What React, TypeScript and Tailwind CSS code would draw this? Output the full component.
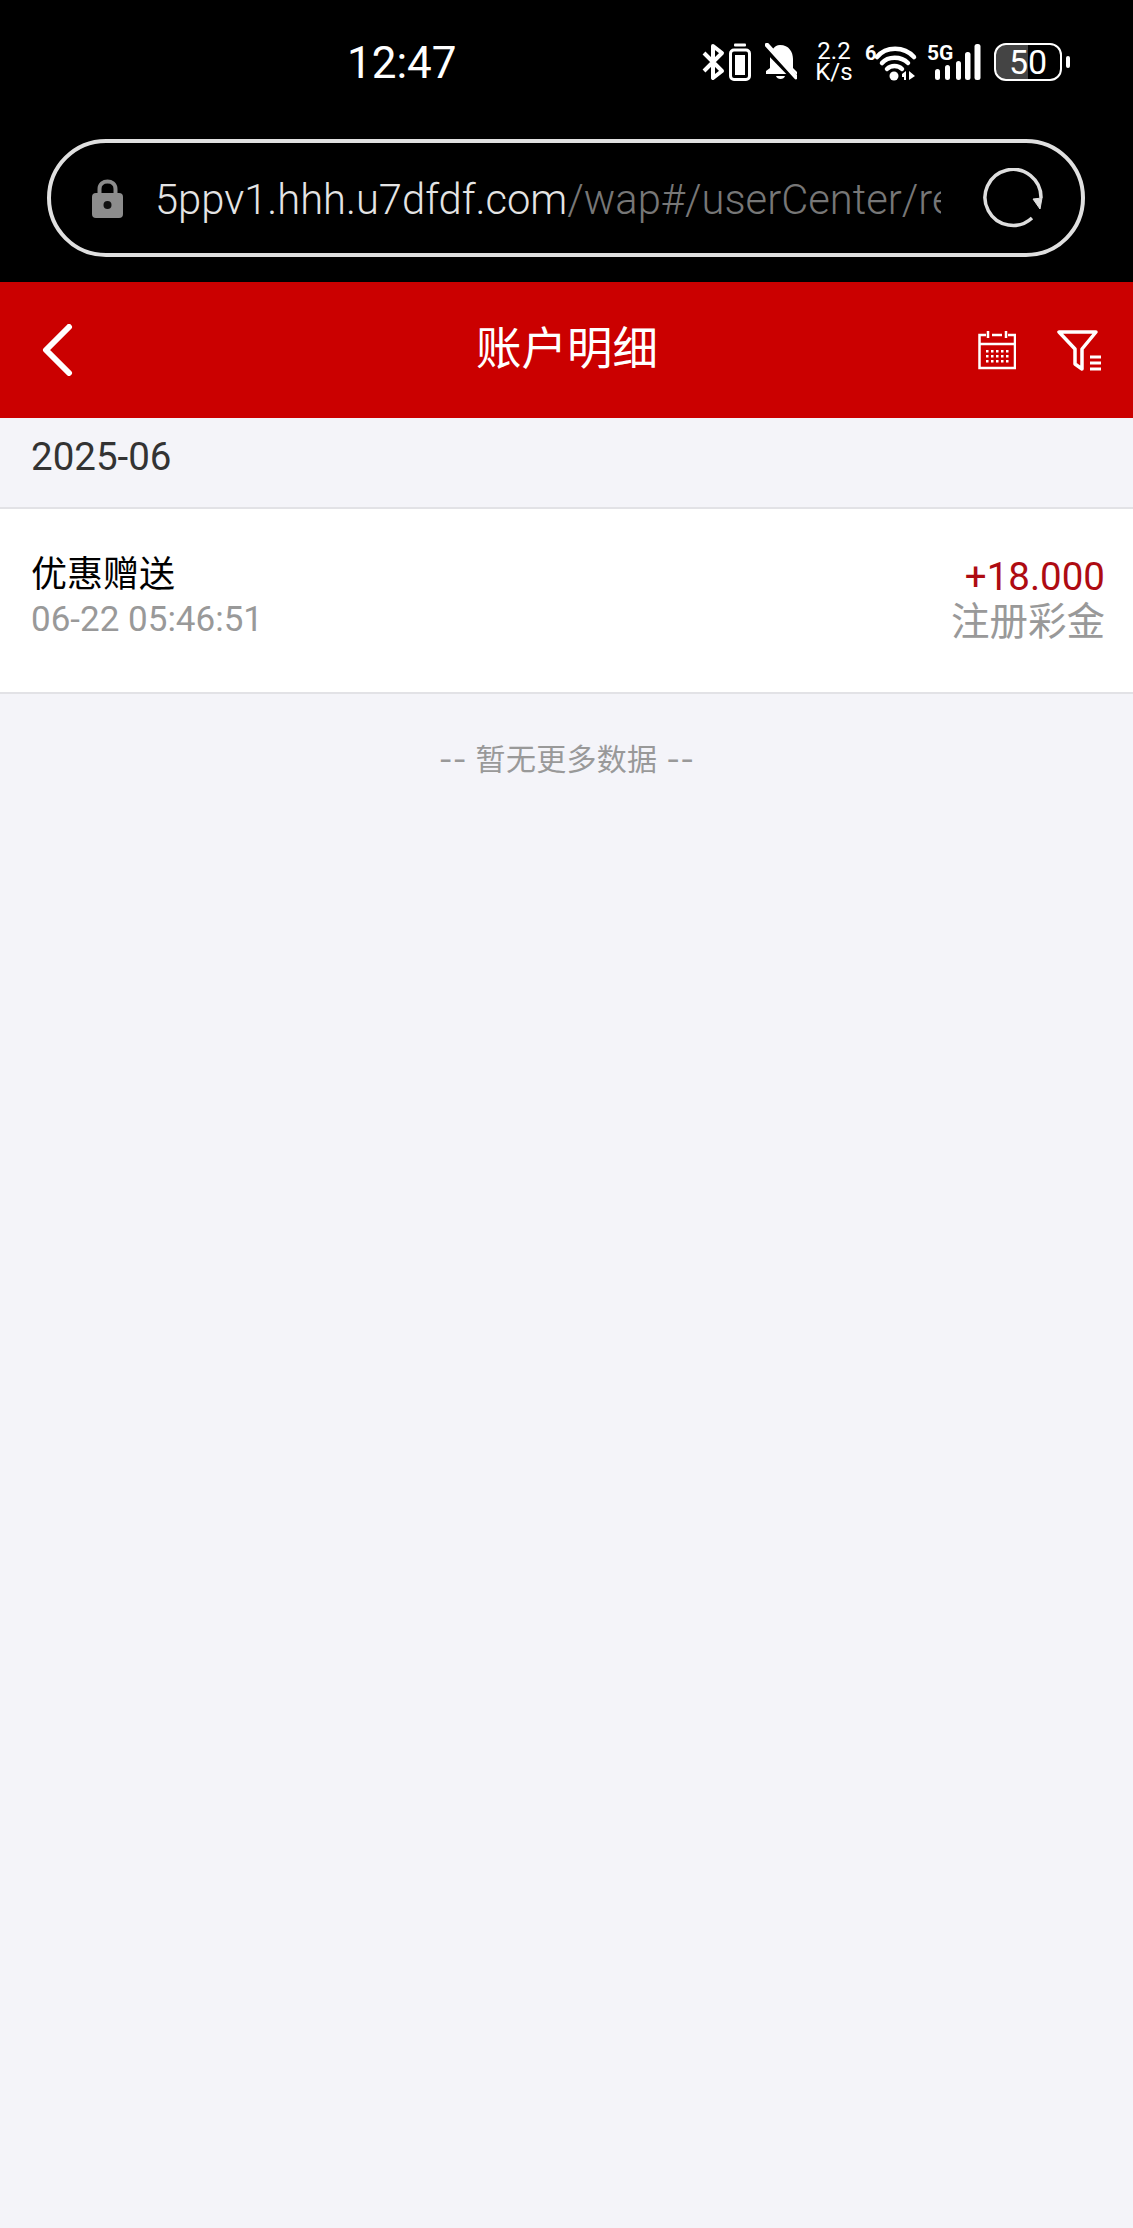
const sans = "font-['Roboto','Noto_Sans_CJK_SC',sans-serif]";

function Bluetooth() {
  return (
    <svg width="24" height="38" viewBox="0 0 24 38" fill="none" stroke="white" strokeWidth="4" strokeLinejoin="round">
      <path d="M2 10 L20 28 L11 35 L11 3 L20 10 L2 28" />
    </svg>
  );
}

function BatterySaver() {
  return (
    <svg width="22" height="38" viewBox="0 0 22 38" fill="none">
      <rect x="5" y="0.5" width="12" height="3" rx="1" fill="white" />
      <rect x="1.5" y="7" width="19" height="29.5" rx="3.5" stroke="white" strokeWidth="3" />
      <rect x="6" y="12" width="10" height="20" fill="white" />
    </svg>
  );
}

function BellMuted() {
  return (
    <svg width="32" height="37" viewBox="0 0 32 37" fill="none">
      <path d="M15 2 C24 2 28 9 28 16 L28 25 L32 29 L32 31 L1 31 L1 28 L5 25 L5 14 C6 8 9 2 15 2 Z" fill="white" />
      <path d="M11 33 L20 33 C19 37 12 37 11 33 Z" fill="white" />
      <path d="M-1 3 L31 36" stroke="black" strokeWidth="7" />
      <path d="M2 2 L31 34" stroke="white" strokeWidth="4.5" strokeLinecap="round" />
    </svg>
  );
}

function WifiSix() {
  return (
    <svg className="overflow-visible" width="52" height="38" viewBox="0 0 52 38" fill="none">
      <text x="0" y="17" fill="white" fontSize="20" fontWeight="700" fontFamily="Roboto, sans-serif">6</text>
      <path d="M12 14 C21 3 39 3 49 14" stroke="white" strokeWidth="4.5" strokeLinecap="round" />
      <path d="M17 20 C23 13 36 13 43 20" stroke="white" strokeWidth="4.5" strokeLinecap="round" />
      <path d="M22 26 C26 22 33 22 37 26" stroke="white" strokeWidth="4.5" strokeLinecap="round" />
      <circle cx="29" cy="33" r="4.5" fill="white" />
      <path d="M37 31 L41 28 L41 37 L39 37 L39 34 L37 34 Z M44 28 L50 33 L44 37 Z" fill="white" />
    </svg>
  );
}

function Signal() {
  return (
    <svg className="overflow-visible" width="54" height="38" viewBox="0 0 54 38" fill="white">
      <text x="0" y="17" fontSize="21" fontWeight="700" fontFamily="Roboto, sans-serif">5G</text>
      <rect x="8" y="26" width="5" height="11" rx="2.5" />
      <rect x="18" y="22" width="5" height="15" rx="2.5" />
      <rect x="29" y="18" width="5" height="19" rx="2.5" />
      <rect x="38" y="9" width="5.5" height="28" rx="2.5" />
      <rect x="47.5" y="1" width="6" height="36" rx="2.5" />
    </svg>
  );
}

function Lock() {
  return (
    <svg width="31" height="39" viewBox="0 0 31 39" fill="none">
      <path d="M7.5 17 L7.5 10 C7.5 0 23.5 0 23.5 10 L23.5 17" stroke="#8c8c8c" strokeWidth="4" />
      <rect x="0" y="14" width="31" height="25" rx="4" fill="#8c8c8c" />
      <circle cx="15.5" cy="26" r="4" fill="#111" />
    </svg>
  );
}

function Refresh() {
  return (
    <svg width="60" height="60" viewBox="0 0 60 60" fill="none">
      <path d="M49 50 A28 28 0 1 1 58 30" stroke="#dedede" strokeWidth="3.5" />
      <path d="M50 31 L59 30 L57 41 Z" fill="#dedede" stroke="#dedede" strokeWidth="1" strokeLinejoin="round" />
    </svg>
  );
}

function BackArrow() {
  return (
    <svg width="32" height="52" viewBox="0 0 32 52" fill="none">
      <path d="M28 3 L5 26 L28 49" stroke="white" strokeWidth="6" strokeLinecap="round" strokeLinejoin="round" />
    </svg>
  );
}

function Calendar() {
  const dots = [];
  for (const y of [20, 25, 30]) {
    for (const x of [8, 13, 18, 23, 28]) {
      dots.push(<rect key={`${x}-${y}`} x={x} y={y} width="2.5" height="2.5" fill="white" />);
    }
  }
  return (
    <svg width="38" height="40" viewBox="0 0 38 40" fill="none">
      <path d="M8 5 L1.5 5 L1.5 38 L37 38 L37 5 L30 5" stroke="white" strokeWidth="2.5" />
      <path d="M14 5 L24 5 M10 1 L10 8 M28 1 L28 8 M1.5 14 L37 14" stroke="white" strokeWidth="2.5" />
      {dots}
    </svg>
  );
}

function Filter() {
  return (
    <svg width="44" height="41" viewBox="0 0 44 41" fill="none">
      <path d="M2 2 L39 2 L25 19 L25 39 L18 34 L18 19 Z" stroke="white" strokeWidth="3.5" strokeLinejoin="round" />
      <path d="M33 27 L44 27 M33 33 L44 33 M33 39 L44 39" stroke="white" strokeWidth="3" />
    </svg>
  );
}

export default function App() {
  return (
    <div className={`${sans} min-h-[2228px] w-full bg-[#f4f4f9]`}>
      <div className="bg-black">
        <div className="flex h-[139px] items-start pt-[43px] text-white">
          <div className="ml-[347px] w-[355px] text-[44px] leading-[40px] font-normal">12:47</div>
          <Bluetooth />
          <div className="ml-[3px]"><BatterySaver /></div>
          <div className="ml-[14px]"><BellMuted /></div>
          <div className="mt-[-2px] ml-[18px] w-[38px] text-center text-[24px] leading-[21px]">
            <div>2.2</div>
            <div>K/s</div>
          </div>
          <div className="ml-[12px]"><WifiSix /></div>
          <div className="ml-[10px]"><Signal /></div>
          <div className="ml-[13px] flex h-[38px] w-[68px] items-center justify-center rounded-[12px] border-[2.5px] border-white bg-[linear-gradient(90deg,#444_50%,#000_50%)] text-[34px] leading-none">
            50
          </div>
          <div className="mt-[13px] ml-[4px] h-[12px] w-[4px] rounded-full bg-white"></div>
        </div>

        <div className="flex h-[143px] items-start pr-[48px] pl-[47px]">
          <div className="flex h-[118px] w-full items-center rounded-full border-[4px] border-[#e0e0e0] pl-[41px]">
            <Lock />
            <div className="ml-[32px] w-[786px] overflow-hidden pt-[3px] text-[41.7px] leading-[50px] font-light whitespace-nowrap text-[#e4e4e4]">
              5ppv1.hhh.u7dfdf.com<span className="text-[#777]">/wap#/userCenter/record</span>
            </div>
            <div className="ml-[42px]"><Refresh /></div>
          </div>
        </div>
      </div>

      <header className="flex h-[136px] items-center bg-[#cb0000] px-[32px] text-white">
        <div className="flex-1 pl-[9px]"><BackArrow /></div>
        <h1 className="mr-[8px] text-[45.5px] leading-none font-normal">账户明细</h1>
        <div className="flex flex-1 items-center justify-end gap-[41px]">
          <Calendar />
          <Filter />
        </div>
      </header>

      <div className="flex h-[91px] items-start border-b-2 border-[#e2e2e6] pt-[19px] pl-[31px] text-[38.5px] leading-[40px] text-[#333]">
        2025-06
      </div>

      <div className="flex h-[185px] items-center justify-between border-b-2 border-[#e2e2e6] bg-white pr-[28px] pl-[31px]">
        <div className="mb-[5px]">
          <div className="text-[36px] leading-[44px] text-black">优惠赠送</div>
          <div className="text-[35px] leading-[46px] text-[#999]">06-22 05:46:51</div>
        </div>
        <div className="mb-[4px] text-right">
          <div className="text-[38.5px] leading-[46px] text-[#ae0b12]">+18.000</div>
          <div className="text-[38.5px] leading-[44px] text-[#999]">注册彩金</div>
        </div>
      </div>

      <div className="pt-[45px] text-center font-['Inter','Noto_Sans_CJK_SC',sans-serif] text-[30px] leading-[40px] tracking-[0.3px] text-[#999]">-- 暂无更多数据 --</div>
    </div>
  );
}
